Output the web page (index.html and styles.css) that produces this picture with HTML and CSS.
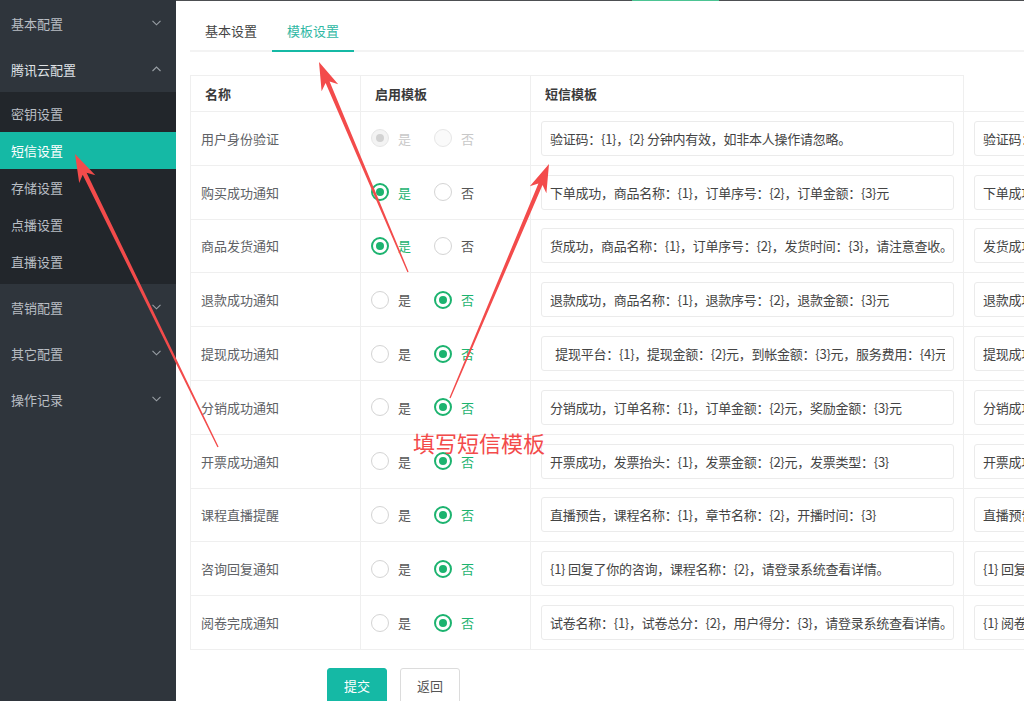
FILE: index.html
```html
<!DOCTYPE html>
<html lang="zh-CN">
<head>
<meta charset="utf-8">
<title>短信设置</title>
<link rel="stylesheet" href="styles.css">
</head>
<body>
<div class="app">
  <aside class="sidebar">
    <ul class="menu">
      <li class="menu-item">
        <div class="menu-title"><span>基本配置</span><svg class="chev" width="9" height="6" viewBox="0 0 9 6"><polyline points="0.5,0.8 4.5,4.8 8.5,0.8"/></svg></div>
      </li>
      <li class="menu-item open">
        <div class="menu-title"><span>腾讯云配置</span><svg class="chev" width="9" height="6" viewBox="0 0 9 6"><polyline points="0.5,5 4.5,1 8.5,5"/></svg></div>
        <ul class="submenu">
          <li>密钥设置</li>
          <li class="active">短信设置</li>
          <li>存储设置</li>
          <li>点播设置</li>
          <li>直播设置</li>
        </ul>
      </li>
      <li class="menu-item">
        <div class="menu-title"><span>营销配置</span><svg class="chev" width="9" height="6" viewBox="0 0 9 6"><polyline points="0.5,0.8 4.5,4.8 8.5,0.8"/></svg></div>
      </li>
      <li class="menu-item">
        <div class="menu-title"><span>其它配置</span><svg class="chev" width="9" height="6" viewBox="0 0 9 6"><polyline points="0.5,0.8 4.5,4.8 8.5,0.8"/></svg></div>
      </li>
      <li class="menu-item">
        <div class="menu-title"><span>操作记录</span><svg class="chev" width="9" height="6" viewBox="0 0 9 6"><polyline points="0.5,0.8 4.5,4.8 8.5,0.8"/></svg></div>
      </li>
    </ul>
  </aside>

  <main class="main">
    <div class="tabs">
      <div class="tab">基本设置</div>
      <div class="tab active">模板设置</div>
    </div>

    <table class="tpl-table">
      <colgroup>
        <col class="c-name"><col class="c-enable"><col class="c-tpl"><col class="c-tpl">
      </colgroup>
      <thead>
        <tr><th>名称</th><th>启用模板</th><th>短信模板</th><th class="th-extra"></th></tr>
      </thead>
      <tbody>
        <tr>
          <td class="name">用户身份验证</td>
          <td><div class="radios"><label class="radio checked disabled"><span class="dot"></span>是</label><label class="radio disabled"><span class="dot"></span>否</label></div></td>
          <td><input class="ipt" value="验证码：{1}，{2} 分钟内有效，如非本人操作请忽略。"></td>
          <td><input class="ipt" value="验证码：{1}，{2} 分钟内有效，如非本人操作请忽略。"></td>
        </tr>
        <tr>
          <td class="name">购买成功通知</td>
          <td><div class="radios"><label class="radio checked"><span class="dot"></span>是</label><label class="radio"><span class="dot"></span>否</label></div></td>
          <td><input class="ipt" value="下单成功，商品名称：{1}，订单序号：{2}，订单金额：{3}元"></td>
          <td><input class="ipt" value="下单成功，商品名称：{1}，订单序号：{2}，订单金额：{3}元"></td>
        </tr>
        <tr>
          <td class="name">商品发货通知</td>
          <td><div class="radios"><label class="radio checked"><span class="dot"></span>是</label><label class="radio"><span class="dot"></span>否</label></div></td>
          <td><input class="ipt" value="货成功，商品名称：{1}，订单序号：{2}，发货时间：{3}，请注意查收。"></td>
          <td><input class="ipt" value="发货成功，商品名称：{1}，订单序号：{2}，发货时间：{3}"></td>
        </tr>
        <tr>
          <td class="name">退款成功通知</td>
          <td><div class="radios"><label class="radio"><span class="dot"></span>是</label><label class="radio checked"><span class="dot"></span>否</label></div></td>
          <td><input class="ipt" value="退款成功，商品名称：{1}，退款序号：{2}，退款金额：{3}元"></td>
          <td><input class="ipt" value="退款成功，商品名称：{1}，退款序号：{2}，退款金额：{3}元"></td>
        </tr>
        <tr>
          <td class="name">提现成功通知</td>
          <td><div class="radios"><label class="radio"><span class="dot"></span>是</label><label class="radio checked"><span class="dot"></span>否</label></div></td>
          <td><input class="ipt" value="  提现平台：{1}，提现金额：{2}元，到帐金额：{3}元，服务费用：{4}元"></td>
          <td><input class="ipt" value="提现成功，提现平台：{1}，提现金额：{2}元"></td>
        </tr>
        <tr>
          <td class="name">分销成功通知</td>
          <td><div class="radios"><label class="radio"><span class="dot"></span>是</label><label class="radio checked"><span class="dot"></span>否</label></div></td>
          <td><input class="ipt" value="分销成功，订单名称：{1}，订单金额：{2}元，奖励金额：{3}元"></td>
          <td><input class="ipt" value="分销成功，订单名称：{1}，订单金额：{2}元"></td>
        </tr>
        <tr>
          <td class="name">开票成功通知</td>
          <td><div class="radios"><label class="radio"><span class="dot"></span>是</label><label class="radio checked"><span class="dot"></span>否</label></div></td>
          <td><input class="ipt" value="开票成功，发票抬头：{1}，发票金额：{2}元，发票类型：{3}"></td>
          <td><input class="ipt" value="开票成功，发票抬头：{1}，发票金额：{2}元"></td>
        </tr>
        <tr>
          <td class="name">课程直播提醒</td>
          <td><div class="radios"><label class="radio"><span class="dot"></span>是</label><label class="radio checked"><span class="dot"></span>否</label></div></td>
          <td><input class="ipt" value="直播预告，课程名称：{1}，章节名称：{2}，开播时间：{3}"></td>
          <td><input class="ipt" value="直播预告，课程名称：{1}，章节名称：{2}"></td>
        </tr>
        <tr>
          <td class="name">咨询回复通知</td>
          <td><div class="radios"><label class="radio"><span class="dot"></span>是</label><label class="radio checked"><span class="dot"></span>否</label></div></td>
          <td><input class="ipt" value="{1} 回复了你的咨询，课程名称：{2}，请登录系统查看详情。"></td>
          <td><input class="ipt" value="{1} 回复了你的咨询，课程名称：{2}"></td>
        </tr>
        <tr>
          <td class="name">阅卷完成通知</td>
          <td><div class="radios"><label class="radio"><span class="dot"></span>是</label><label class="radio checked"><span class="dot"></span>否</label></div></td>
          <td><input class="ipt" value="试卷名称：{1}，试卷总分：{2}，用户得分：{3}，请登录系统查看详情。"></td>
          <td><input class="ipt" value="{1} 阅卷完成，试卷名称：{2}"></td>
        </tr>
      </tbody>
    </table>

    <div class="actions">
      <button class="btn btn-primary">提交</button>
      <button class="btn">返回</button>
    </div>
  </main>

  <span class="top-progress"></span>

  <svg class="annot" width="1024" height="701" viewBox="0 0 1024 701">
    <polygon points="75,154 95.4,175.2 86.6,172.8 218.6,446.7 217.4,447.3 82.7,174.7 79.2,183.1"/>
    <polygon points="319,62 338.2,84.3 329.6,81.4 408.6,271.7 407.4,272.3 325.6,83.1 321.6,91.3"/>
    <polygon points="549,164 546.4,193.3 542.5,185.1 450.6,398.3 449.4,397.7 538.4,183.4 529.8,186.3"/>
  </svg>
  <div class="annot-text">填写短信模板</div>
</div>
</body>
</html>
```

FILE: styles.css
```css
* { box-sizing: border-box; }

html, body {
  margin: 0;
  padding: 0;
}

body {
  width: 1024px;
  height: 701px;
  overflow: hidden;
  font-family: "Noto Sans CJK SC", "Liberation Sans", sans-serif;
  font-size: 13px;
  color: #333;
  background: #fff;
}

ul { list-style: none; margin: 0; padding: 0; }

.app {
  position: relative;
  display: flex;
  width: 1024px;
  height: 701px;
}

/* ---------- sidebar ---------- */
.sidebar {
  flex: none;
  width: 176px;
  height: 100%;
  background: #2f353c;
}

.menu-title {
  height: 46px;
  display: flex;
  align-items: center;
  justify-content: space-between;
  padding: 0 15px 0 11px;
  color: #b9bec4;
}

.menu-item.open > .menu-title { color: #dfe2e6; }

.chev {
  fill: none;
  stroke: #9aa0a6;
  stroke-width: 1.1;
}

.submenu {
  background: #22262b;
  padding: 3px 0 4px;
}

.submenu li {
  height: 37px;
  line-height: 37px;
  padding-left: 11px;
  color: #b9bec4;
}

.submenu li.active {
  background: #15b9a5;
  color: #fff;
}

/* ---------- main ---------- */
.main {
  flex: 1;
  min-width: 0;
  height: 100%;
  border-top: 1px solid #4d4f52;
  padding: 0 0 0 14px;
  overflow: hidden;
  background: #fff;
}

.top-progress {
  position: absolute;
  left: 632px;
  top: 0;
  width: 87px;
  height: 1px;
  background: #4cc493;
}

.tabs {
  display: flex;
  margin-top: 11px;
  border-bottom: 2px solid #f3f3f3;
}

.tab {
  height: 40px;
  line-height: 38px;
  padding: 0 15px;
  color: #444;
  margin-bottom: -2px;
  border-bottom: 2px solid transparent;
}

.tab.active {
  color: #2fb8a4;
  border-bottom-color: #15b9a5;
}

/* ---------- table ---------- */
.tpl-table {
  margin-top: 23px;
  border-collapse: collapse;
  table-layout: fixed;
  width: 1206px;
}

.c-name, .c-enable { width: 170px; }
.c-tpl { width: 433px; }

.tpl-table th,
.tpl-table td {
  border: 1px solid #efefef;
}

.tpl-table thead tr { height: 36px; }

.tpl-table th {
  text-align: left;
  font-weight: bold;
  color: #3a3a3a;
  padding: 0 14px;
}

.tpl-table th.th-extra { border-top-style: hidden; }

.tpl-table tbody tr { height: 53.8px; }

.tpl-table td {
  padding: 0 9px 0 10px;
  color: #606266;
}

.radios {
  display: flex;
  align-items: center;
  gap: 23px;
}

.radio {
  display: inline-flex;
  align-items: center;
  gap: 9px;
  color: #555;
}

.dot {
  position: relative;
  width: 18px;
  height: 18px;
  border: 1.5px solid #d4d4d4;
  border-radius: 50%;
  background: #fff;
}

.radio.checked { color: #1cb36f; }

.radio.checked .dot { border: 2px solid #1cb36f; }

.radio.checked .dot::after {
  content: "";
  position: absolute;
  left: 50%;
  top: 50%;
  width: 8px;
  height: 8px;
  margin: -4px 0 0 -4px;
  border-radius: 50%;
  background: #1cb36f;
}

.radio.disabled { color: #c8c8c8; }
.radio.disabled .dot { border: 1.5px solid #e6e6e6; background: #fafafa; }
.radio.checked.disabled .dot { background: #f3f3f3; }
.radio.checked.disabled .dot::after { background: #d2d2d2; }

.ipt {
  display: block;
  width: 100%;
  height: 35px;
  padding: 0 8px;
  border: 1px solid #ebebeb;
  border-radius: 3px;
  font-family: "Noto Sans CJK SC", "Liberation Sans", sans-serif;
  font-size: 13px;
  letter-spacing: -0.25px;
  color: #444;
  background: #fff;
  outline: none;
}

/* ---------- actions ---------- */
.actions {
  display: flex;
  gap: 13px;
  margin-top: 18px;
  padding-left: 137px;
}

.btn {
  height: 36px;
  width: 60px;
  padding: 0;
  border: 1px solid #dcdcdc;
  border-radius: 3px;
  background: #fff;
  color: #555;
  font-family: "Noto Sans CJK SC", "Liberation Sans", sans-serif;
  font-size: 13px;
}

.btn-primary {
  background: #15b9a5;
  border-color: #15b9a5;
  color: #fff;
}

/* ---------- annotations ---------- */
.annot {
  position: absolute;
  left: 0;
  top: 0;
  pointer-events: none;
}

.annot polygon { fill: #f34b4b; }

.annot-text {
  position: absolute;
  left: 413px;
  top: 432px;
  font-size: 22px;
  line-height: 20px;
  color: #f34b4b;
  pointer-events: none;
}
```
